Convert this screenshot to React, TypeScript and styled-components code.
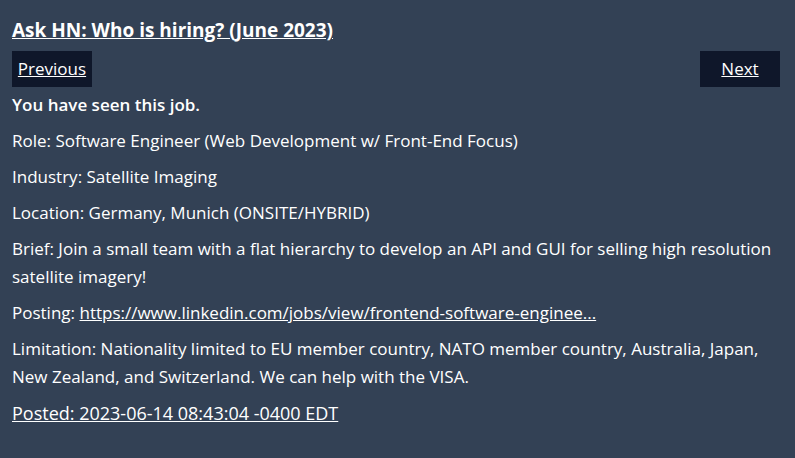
import React from 'react';
import styled, { createGlobalStyle } from 'styled-components';

const GlobalStyle = createGlobalStyle`
  *, *::before, *::after { box-sizing: border-box; }
  body {
    margin: 0;
    background: #334155;
    color: #ffffff;
    font: 17px/28px "Open Sans", "Noto Sans", sans-serif;
  }
  a { color: inherit; text-decoration: underline; }
`;

const Page = styled.main`
  padding: 16px 15px 16px 12px;
`;

const Title = styled.h1`
  margin: 0 0 7px;
  font-size: 19px;
  line-height: 28px;
  font-weight: 700;
`;

const Pager = styled.nav`
  display: flex;
  justify-content: space-between;
  margin-bottom: 4px;
`;

const PagerLink = styled.a`
  width: 80px;
  padding: 4px 0;
  background: #0f172a;
  text-align: center;
`;

const Job = styled.article`
  display: flex;
  flex-direction: column;
  gap: 8px;
`;

const Seen = styled.strong`
  font-weight: 600;
`;

const Paragraph = styled.p`
  margin: 0;
`;

const Posted = styled(Paragraph)`
  font-size: 18px;
`;

export default function App() {
  return (
    <>
      <GlobalStyle />
      <Page>
        <Title><a href="#thread">Ask HN: Who is hiring? (June 2023)</a></Title>
        <Pager aria-label="Jobs">
          <PagerLink href="#previous">Previous</PagerLink>
          <PagerLink href="#next">Next</PagerLink>
        </Pager>
        <Job>
          <Seen>You have seen this job.</Seen>
          <Paragraph>Role: Software Engineer (Web Development w/ Front-End Focus)</Paragraph>
          <Paragraph>Industry: Satellite Imaging</Paragraph>
          <Paragraph>Location: Germany, Munich (ONSITE/HYBRID)</Paragraph>
          <Paragraph>
            Brief: Join a small team with a flat hierarchy to develop an API and GUI for selling high resolution satellite imagery!
          </Paragraph>
          <Paragraph>
            Posting: <a href="#posting">https://www.linkedin.com/jobs/view/frontend-software-enginee...</a>
          </Paragraph>
          <Paragraph>
            Limitation: Nationality limited to EU member country, NATO member country, Australia, Japan, New Zealand, and Switzerland. We can help with the VISA.
          </Paragraph>
          <Posted><a href="#posted">Posted: 2023-06-14 08:43:04 -0400 EDT</a></Posted>
        </Job>
      </Page>
    </>
  );
}
